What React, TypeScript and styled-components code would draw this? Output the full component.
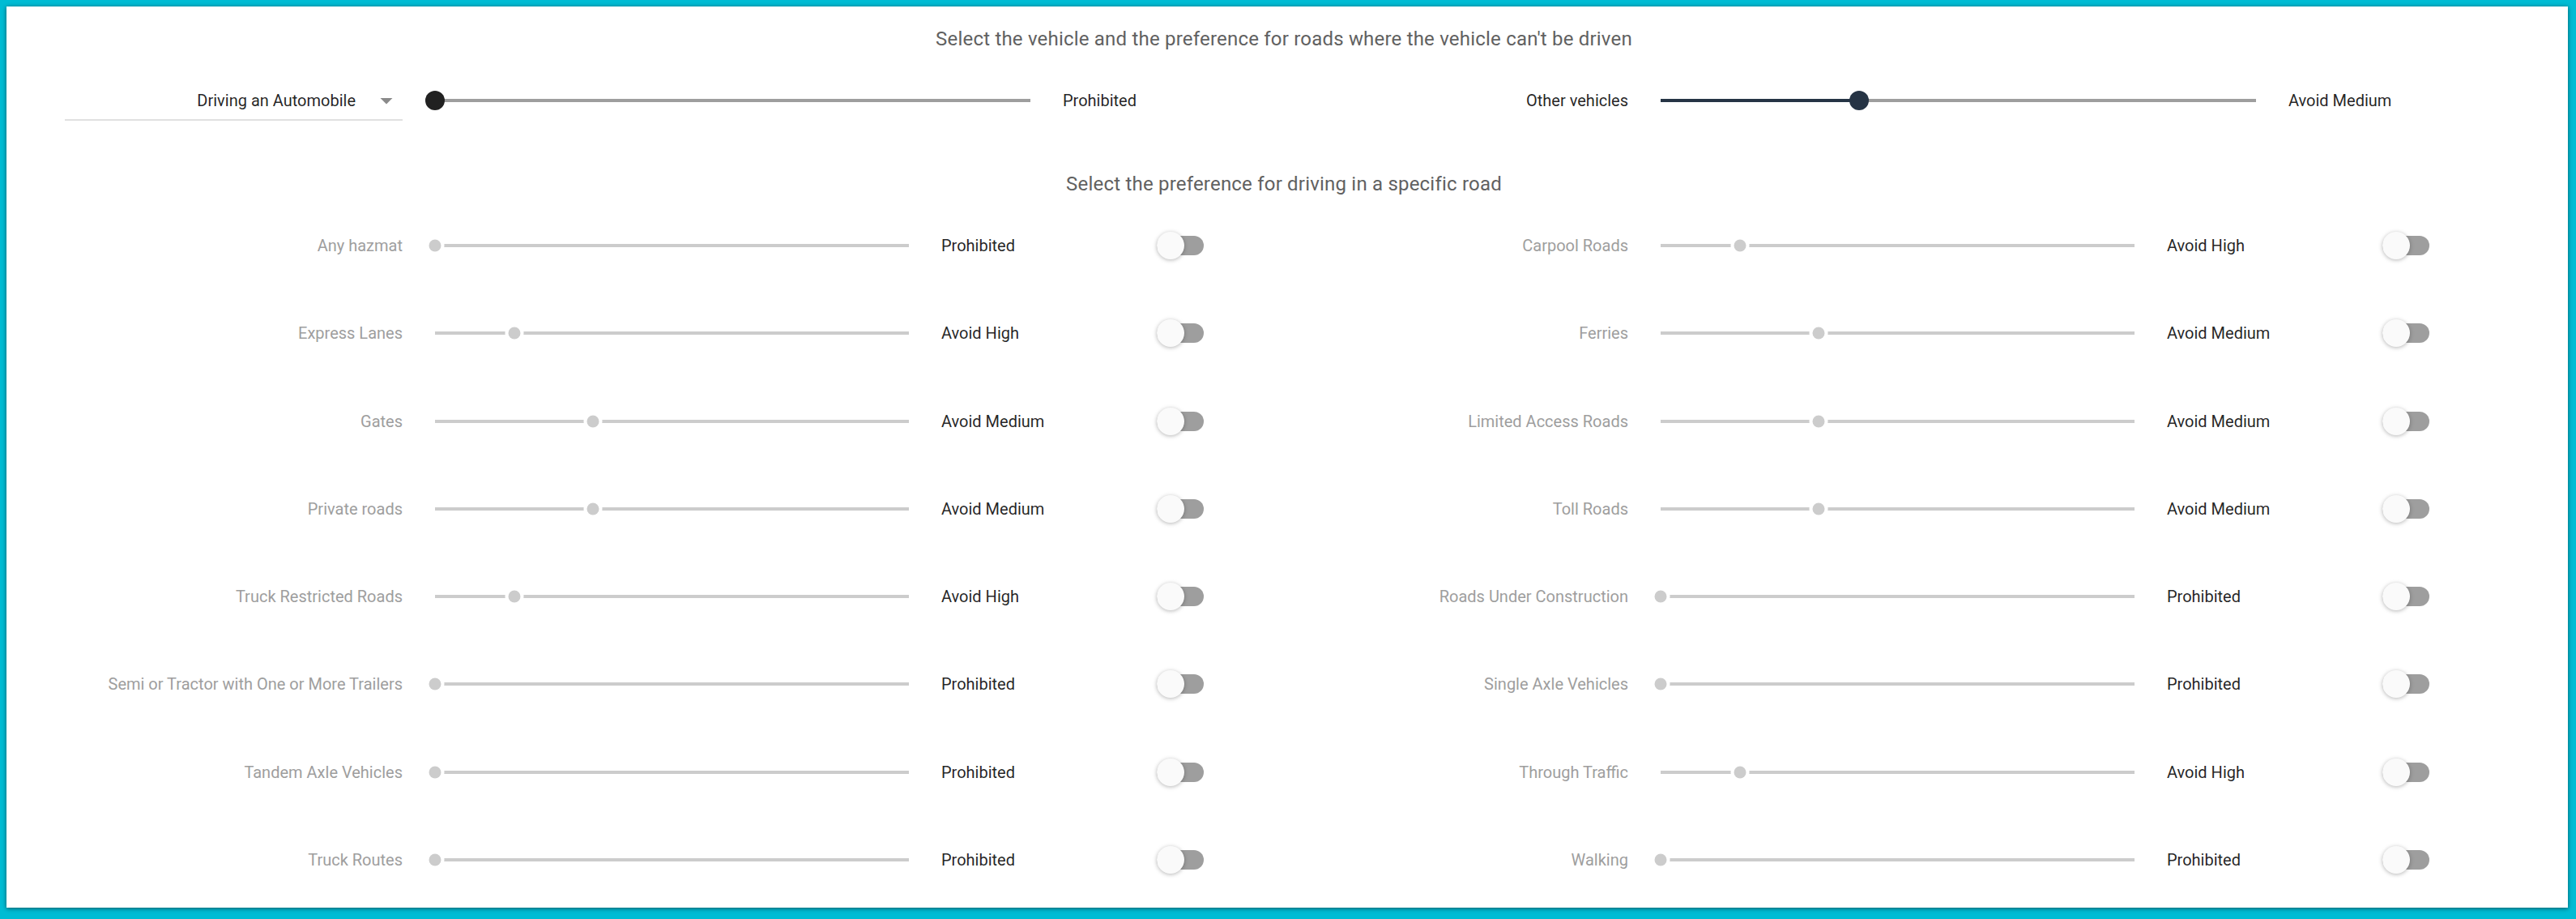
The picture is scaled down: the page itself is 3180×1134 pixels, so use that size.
import React from 'react';
import styled, { createGlobalStyle } from 'styled-components';

const GlobalStyle = createGlobalStyle`
  html, body { margin: 0; padding: 0; background: #00bcd4; }
  body { font-family: Roboto, "Noto Sans", "Liberation Sans", sans-serif; }
  * { box-sizing: border-box; }
`;

const Page = styled.div`
  height: 100vh;
  padding: 8px 10px 14px 8px;
`;

const Card = styled.main`
  height: 100%;
  background: #fff;
  box-shadow: 0 1px 6px rgba(0, 0, 0, 0.3), 0 1px 4px rgba(0, 0, 0, 0.3);
  padding: 26px 40px 0 32px;
  display: flex;
  flex-direction: column;
`;

const Heading = styled.h2<{ $gap: number }>`
  margin: ${(p) => p.$gap}px 0 0;
  font-size: 24px;
  line-height: 28px;
  font-weight: 400;
  letter-spacing: 0.2px;
  color: #616161;
  text-align: center;
`;

const Halves = styled.div<{ $gap: number }>`
  display: grid;
  grid-template-columns: 1513px 1fr;
  margin-top: ${(p) => p.$gap}px;
`;

const TopHalf = styled.div`
  display: grid;
  grid-template-columns: 457px 759px 1fr;
  column-gap: 28px;
  height: 60px;
  align-items: center;
`;

const Column = styled.div`
  display: flex;
  flex-direction: column;
`;

const Row = styled.div`
  display: grid;
  grid-template-columns: 457px 609px 238px 58px;
  column-gap: 28px;
  height: 108.3px;
  align-items: center;
`;

const Label = styled.div<{ $muted?: boolean }>`
  font-size: 20px;
  line-height: 24px;
  text-align: right;
  white-space: nowrap;
  color: ${(p) => (p.$muted ? '#9e9e9e' : 'rgba(0, 0, 0, 0.87)')};
`;

const Value = styled.div`
  font-size: 20px;
  line-height: 24px;
  white-space: nowrap;
  color: rgba(0, 0, 0, 0.87);
`;

const Dropdown = styled.div`
  align-self: start;
  margin-left: 40px;
  height: 55px;
  padding: 7px 2px 0 0;
  border-bottom: 2px solid #e0e0e0;
  display: flex;
  align-items: center;
  justify-content: flex-end;
  gap: 20px;
  font-size: 20px;
  color: rgba(0, 0, 0, 0.87);
  cursor: pointer;
`;

const Caret = styled.svg`
  width: 36px;
  height: 36px;
  fill: #8a8a8a;
  flex: none;
`;

const SliderBox = styled.div`
  height: 40px;
  padding: 0 12px;
  display: flex;
  align-items: center;
`;

const Track = styled.div<{ $h: number; $color: string }>`
  position: relative;
  flex: 1;
  height: ${(p) => p.$h}px;
  background: ${(p) => p.$color};
`;

const Fill = styled.div`
  position: absolute;
  left: 0;
  top: 0;
  bottom: 0;
  background: #263445;
`;

const Thumb = styled.span<{ $size: number; $color: string; $ring?: boolean }>`
  position: absolute;
  top: 50%;
  width: ${(p) => p.$size}px;
  height: ${(p) => p.$size}px;
  border-radius: 50%;
  background: ${(p) => p.$color};
  transform: translate(-50%, -50%);
  box-shadow: ${(p) => (p.$ring ? '0 0 0 4px #fff' : 'none')};
`;

const SwitchBox = styled.div`
  position: relative;
  width: 58px;
  height: 34px;
  display: flex;
  align-items: center;
`;

const SwitchTrack = styled.div`
  width: 58px;
  height: 24px;
  border-radius: 12px;
  background: #9e9e9e;
`;

const SwitchThumb = styled.span`
  position: absolute;
  left: 0;
  top: 0;
  width: 34px;
  height: 34px;
  border-radius: 50%;
  background: #fafafa;
  box-shadow: 0 1px 6px rgba(0, 0, 0, 0.14), 0 1px 4px rgba(0, 0, 0, 0.16);
`;

const LEVELS = ['Prohibited', 'Avoid High', 'Avoid Medium', 'Avoid Low', 'Neutral', 'Prefer Low', 'Prefer High'];
const STEPS = 6;

type Road = { name: string; level: number };

const leftRoads: Road[] = [
  { name: 'Any hazmat', level: 0 },
  { name: 'Express Lanes', level: 1 },
  { name: 'Gates', level: 2 },
  { name: 'Private roads', level: 2 },
  { name: 'Truck Restricted Roads', level: 1 },
  { name: 'Semi or Tractor with One or More Trailers', level: 0 },
  { name: 'Tandem Axle Vehicles', level: 0 },
  { name: 'Truck Routes', level: 0 },
];

const rightRoads: Road[] = [
  { name: 'Carpool Roads', level: 1 },
  { name: 'Ferries', level: 2 },
  { name: 'Limited Access Roads', level: 2 },
  { name: 'Toll Roads', level: 2 },
  { name: 'Roads Under Construction', level: 0 },
  { name: 'Single Axle Vehicles', level: 0 },
  { name: 'Through Traffic', level: 1 },
  { name: 'Walking', level: 0 },
];

function ActiveSlider({ level, thumbColor }: { level: number; thumbColor: string }) {
  const pct = (level / STEPS) * 100;
  return (
    <SliderBox>
      <Track $h={4} $color="#9e9e9e">
        <Fill style={{ width: `${pct}%` }} />
        <Thumb $size={24} $color={thumbColor} style={{ left: `${pct}%` }} />
      </Track>
    </SliderBox>
  );
}

function DisabledSlider({ level }: { level: number }) {
  const pct = (level / STEPS) * 100;
  return (
    <SliderBox>
      <Track $h={4} $color="#cccccc">
        <Thumb $size={15} $color="#cccccc" $ring style={{ left: `${pct}%` }} />
      </Track>
    </SliderBox>
  );
}

function Toggle() {
  return (
    <SwitchBox>
      <SwitchTrack />
      <SwitchThumb />
    </SwitchBox>
  );
}

function RoadRow({ road }: { road: Road }) {
  return (
    <Row>
      <Label $muted>{road.name}</Label>
      <DisabledSlider level={road.level} />
      <Value>{LEVELS[road.level]}</Value>
      <Toggle />
    </Row>
  );
}

export default function App() {
  return (
    <>
      <GlobalStyle />
      <Page>
        <Card>
          <Heading $gap={0}>Select the vehicle and the preference for roads where the vehicle can't be driven</Heading>
          <Halves $gap={32}>
            <TopHalf>
              <Dropdown>
                <span>Driving an Automobile</span>
                <Caret viewBox="0 0 24 24">
                  <path d="M7 10l5 5 5-5z" />
                </Caret>
              </Dropdown>
              <ActiveSlider level={0} thumbColor="#212121" />
              <Value>Prohibited</Value>
            </TopHalf>
            <TopHalf>
              <Label>Other vehicles</Label>
              <ActiveSlider level={2} thumbColor="#263445" />
              <Value>Avoid Medium</Value>
            </TopHalf>
          </Halves>
          <Heading $gap={58.5}>Select the preference for driving in a specific road</Heading>
          <Halves $gap={8.35}>
            <Column>
              {leftRoads.map((r) => (
                <RoadRow key={r.name} road={r} />
              ))}
            </Column>
            <Column>
              {rightRoads.map((r) => (
                <RoadRow key={r.name} road={r} />
              ))}
            </Column>
          </Halves>
        </Card>
      </Page>
    </>
  );
}
